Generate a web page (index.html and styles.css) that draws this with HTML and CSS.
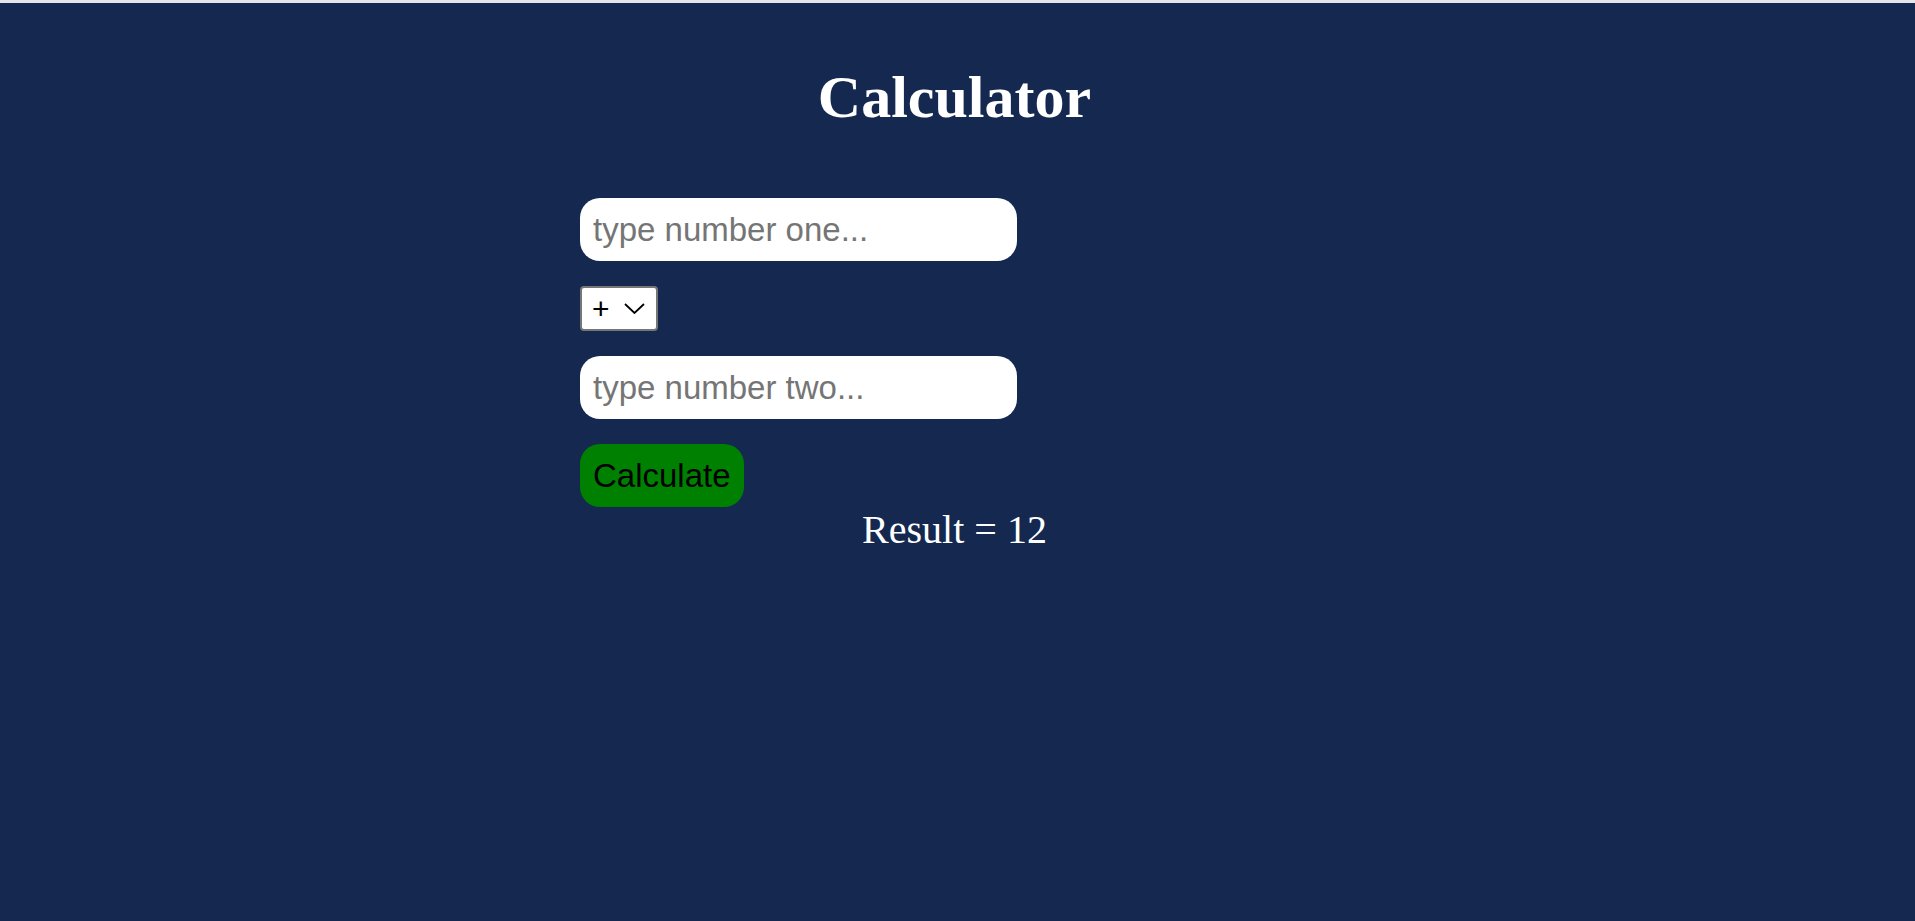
FILE: index.html
```html
<!DOCTYPE html>
<html lang="en">
<head>
<meta charset="utf-8">
<title>Calculator</title>
<link rel="stylesheet" href="styles.css">
</head>
<body>
<div class="topbar"></div>
<main class="calc">
  <h1 class="title">Calculator</h1>
  <form class="form">
    <input class="field" type="text" placeholder="type number one...">
    <select class="op">
      <option>+</option>
      <option>-</option>
      <option>*</option>
      <option>/</option>
    </select>
    <input class="field" type="text" placeholder="type number two...">
    <button class="btn" type="button">Calculate</button>
  </form>
  <p class="result">Result = 12</p>
</main>
</body>
</html>
```

FILE: styles.css
```css
html, body {
  margin: 0;
  padding: 0;
  background: #142850;
  height: 100%;
}

.topbar {
  height: 3px;
  background: #e4e6ea;
}

.calc {
  width: 749px;
  margin: 0 0 0 580px;
}

.title {
  margin: 0;
  padding-top: 60px;
  text-align: center;
  font-family: "Liberation Serif", "Times New Roman", serif;
  font-weight: bold;
  font-size: 60px;
  line-height: 68px;
  color: #ffffff;
}

.form {
  margin-top: 67px;
  display: flex;
  flex-direction: column;
  align-items: flex-start;
  gap: 25px;
}

.field {
  box-sizing: border-box;
  width: 437px;
  height: 63px;
  border: none;
  border-radius: 20px;
  padding: 0 13px;
  background: #ffffff;
  font-family: "Liberation Sans", Arial, sans-serif;
  font-size: 33px;
  color: #000000;
  outline: none;
}

.field::placeholder {
  color: #757575;
}

.op {
  -webkit-appearance: none;
  appearance: none;
  box-sizing: border-box;
  width: 78px;
  height: 45px;
  border: 2px solid #767676;
  border-radius: 4px;
  padding: 0 0 0 10px;
  font-family: "Liberation Sans", Arial, sans-serif;
  font-size: 30px;
  color: #000000;
  background-color: #ffffff;
  background-image: url("data:image/svg+xml;utf8,<svg xmlns='http://www.w3.org/2000/svg' width='21' height='11'><path d='M1 1 L10.5 10 L20 1' fill='none' stroke='black' stroke-width='1.8'/></svg>");
  background-repeat: no-repeat;
  background-position: 42px 15px;
  outline: none;
}

.btn {
  box-sizing: border-box;
  height: 63px;
  padding: 0 13px;
  border: none;
  border-radius: 20px;
  background: #008000;
  color: #000000;
  font-family: "Liberation Sans", Arial, sans-serif;
  font-size: 33px;
  cursor: pointer;
}

.result {
  margin: 0;
  text-align: center;
  font-family: "Liberation Serif", "Times New Roman", serif;
  font-size: 40px;
  line-height: 46px;
  color: #ffffff;
}
```
